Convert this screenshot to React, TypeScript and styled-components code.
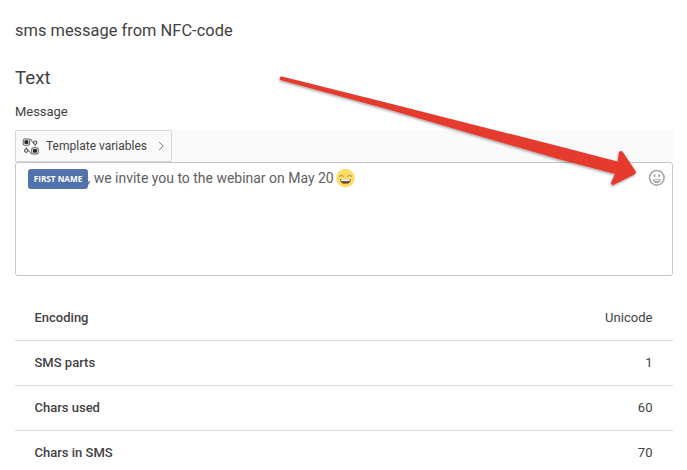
import React from 'react';
import styled, { createGlobalStyle } from 'styled-components';

const GlobalStyle = createGlobalStyle`
  * { box-sizing: border-box; }
  html, body { margin: 0; background: #fff; overflow: hidden; }
  body { font-family: Roboto, "Liberation Sans", sans-serif; color: #424242; }
`;

const Page = styled.main`
  position: relative;
  width: 687px;
  height: 470px;
  padding: 21px 14px 0 15px;
  overflow: hidden;
`;

const Title = styled.h1`
  margin: 0;
  font-size: 16.4px;
  line-height: 20px;
  font-weight: 400;
  letter-spacing: 0.03px;
`;

const SectionTitle = styled.h2`
  margin: 25px 0 0;
  font-size: 18.7px;
  line-height: 24px;
  font-weight: 400;
  letter-spacing: 0;
`;

const Label = styled.div`
  margin: 13px 0 10px;
  font-size: 13px;
  line-height: 17px;
  letter-spacing: -0.04px;
`;

const Toolbar = styled.div`
  display: flex;
  height: 32px;
  background: #fafafa;
`;

const VariablesButton = styled.button`
  display: flex;
  align-items: center;
  width: 157px;
  height: 32px;
  padding: 0 6px;
  border: 1px solid #d6d6d6;
  border-radius: 2px 2px 0 0;
  background: #fafafa;
  color: #424242;
  font: 400 12px/16px Roboto, sans-serif;
  white-space: nowrap;

  span { width: 101px; margin-left: 7px; letter-spacing: 0.01px; }
  svg { flex: none; }
  svg:last-child { margin-left: 11px; }
`;

const Editor = styled.div`
  display: flex;
  align-items: flex-start;
  justify-content: space-between;
  height: 114px;
  padding: 5px 7px 0 12px;
  border: 1px solid #c6c6c6;
  border-radius: 3px;
  background: #fff;
`;

const Message = styled.div`
  display: flex;
  align-items: center;
  height: 21px;
  color: #616161;
  font-size: 14px;
  line-height: 20px;
  white-space: pre;

  svg { margin-left: 2px; margin-top: -2px; }
`;

const MessageText = styled.span`
  margin-left: -0.5px;
  letter-spacing: -0.015px;
  margin-top: -2px;
`;

const Variable = styled.span`
  display: flex;
  align-items: center;
  justify-content: center;
  width: 60px;
  height: 20px;
  border-radius: 3px;
  background: #5272ab;
  color: #fff;
  font: 700 8.2px/20px "Open Sans", sans-serif;
`;

const EmojiButton = styled.button`
  display: flex;
  padding: 0;
  margin-top: 1px;
  border: 0;
  background: transparent;
`;

const Stats = styled.dl`
  margin: 20px 0 0;
`;

const StatRow = styled.div`
  display: flex;
  align-items: center;
  justify-content: space-between;
  height: 45px;
  padding: 0 20.5px 0 19.5px;
  border-bottom: 1px solid #dcdcdc;
  font-size: 13px;
  line-height: 18px;

  dt { font-weight: 500; letter-spacing: 0; }
  dd { margin: 0; letter-spacing: 0.03px; }
`;

const Pointer = styled.svg`
  position: absolute;
  left: 270px;
  top: 65px;
  pointer-events: none;
`;

const stats = [
  { label: 'Encoding', value: 'Unicode' },
  { label: 'SMS parts', value: '1' },
  { label: 'Chars used', value: '60' },
  { label: 'Chars in SMS', value: '70' },
];

function VariablesIcon() {
  return (
    <svg width="17" height="17" viewBox="0 0 17 17" fill="none" stroke="#555">
      <rect x="1.2" y="1" width="6.4" height="6.2" rx="1.2" />
      <rect x="2.5" y="2.3" width="3.8" height="3.6" fill="#222" stroke="none" />
      <rect x="9.8" y="9.8" width="6.4" height="6.2" rx="1.2" />
      <rect x="11.1" y="11.1" width="3.8" height="3.6" fill="#222" stroke="none" />
      <rect x="11.7" y="3.2" width="3" height="3" rx="0.8" stroke="#333" />
      <rect x="2.7" y="11.2" width="3" height="3" rx="0.8" stroke="#333" />
      <path d="M8 1.2c2.4 0 1.2 3.5 3.7 3.5M5.7 12.8c3.4 0 2.4 3.2 4.1 3.2M13.2 6.4v1.8M4.2 11V9.2" />
    </svg>
  );
}

function ChevronIcon() {
  return (
    <svg width="7" height="10" viewBox="0 0 7 10" fill="none" stroke="#777">
      <path d="m1.2 1 4 4-4 4" />
    </svg>
  );
}

function LaughingFace() {
  return (
    <svg width="19" height="20" viewBox="0 0 19 20">
      <circle cx="9.5" cy="10" r="9.3" fill="#ffdd67" />
      <path d="M3.4 8.2Q5.4 6 7.4 8.2M11.6 8.2Q13.6 6 15.6 8.2" fill="none" stroke="#a08a50" strokeWidth="1" strokeLinecap="round" />
      <path d="M4.6 11h9.8c.5 0 .7.4.6.8-.5 2.7-2.6 4.3-5.5 4.3S4.5 14.5 4 11.8c-.1-.4.1-.8.6-.8Z" fill="#72543b" />
      <path d="M5 11.3h9v1c0 .5-.4.8-.9.8H5.9c-.5 0-.9-.3-.9-.8Z" fill="#fff" />
      <path d="M7 15.4q2.5-1.2 5 0-1.1.7-2.5.7T7 15.4Z" fill="#b96b58" />
    </svg>
  );
}

function SmileIcon() {
  return (
    <svg width="17" height="17" viewBox="0 0 17 17">
      <circle cx="8.8" cy="8.8" r="7.3" fill="none" stroke="#aaa" strokeWidth="1.6" />
      <ellipse cx="6.6" cy="6.6" rx="0.9" ry="1.9" fill="#aaa" />
      <ellipse cx="11" cy="6.6" rx="0.9" ry="1.9" fill="#aaa" />
      <path d="M4.6 10.2h8.4c-.5 2.5-2 3.9-4.2 3.9s-3.7-1.4-4.2-3.9Z" fill="#aaa" />
      <path d="M6 11h5.6l-.5.8H6.5Z" fill="#fff" />
    </svg>
  );
}

function PointerArrow() {
  return (
    <Pointer width="375" height="130" viewBox="270 65 375 130">
      <defs>
        <filter id="arrow-shadow" x="-5%" y="-10%" width="110%" height="125%">
          <feDropShadow dx="-0.5" dy="1.4" stdDeviation="0.8" floodColor="#000" floodOpacity="0.35" />
        </filter>
      </defs>
      <path
        d="M282 76.5 385 102.3 560 146.5 617.5 161.5 619 152.3Q620.6 150 623 152.2L635.7 171.3Q636.5 173 634.8 174.2L613.5 184.9Q610.6 184.7 611 182.4L615 174 560 159.6 385 108.4 281 80.2C278.8 79.5 279.6 76 282 76.5Z"
        fill="#e53b2f"
        filter="url(#arrow-shadow)"
      />
    </Pointer>
  );
}

export default function App() {
  return (
    <>
      <GlobalStyle />
      <Page>
        <Title>sms message from NFC-code</Title>
        <SectionTitle>Text</SectionTitle>
        <Label>Message</Label>
        <Toolbar>
          <VariablesButton type="button">
            <VariablesIcon />
            <span>Template variables</span>
            <ChevronIcon />
          </VariablesButton>
        </Toolbar>
        <Editor>
          <Message>
            <Variable>FIRST NAME</Variable>
            <MessageText>, we invite you to the webinar on May 20</MessageText>
            <LaughingFace />
          </Message>
          <EmojiButton type="button" aria-label="Insert emoji">
            <SmileIcon />
          </EmojiButton>
        </Editor>
        <Stats>
          {stats.map(({ label, value }) => (
            <StatRow key={label}>
              <dt>{label}</dt>
              <dd>{value}</dd>
            </StatRow>
          ))}
        </Stats>
        <PointerArrow />
      </Page>
    </>
  );
}
